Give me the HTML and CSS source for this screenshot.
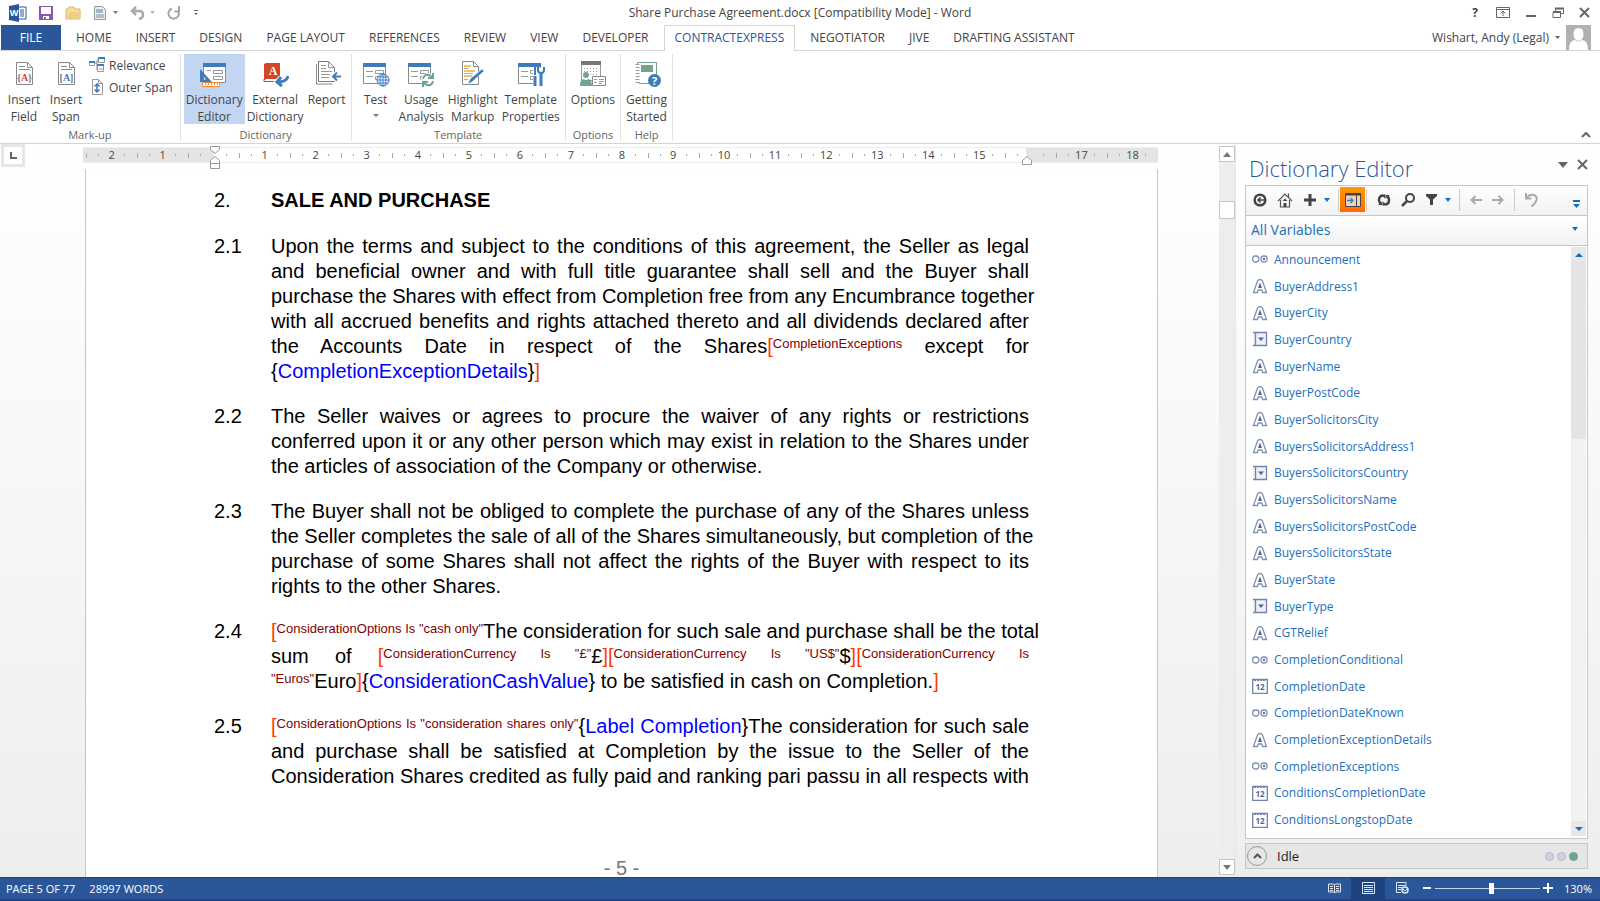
FILE: index.html
```html
<!DOCTYPE html>
<html lang="en">
<head>
    <meta charset="UTF-8">
    <title>Share Purchase Agreement.docx - Word</title>
    <link rel="stylesheet" href="styles.css">
</head>
<body>
    <svg class="defs">
        <symbol id="text" viewBox="0 0 16 16"><path d="M1.5 14.5 5.500 3Q8 0 10.500 3l4 11.500h-4l-.7-2.500H6.200l-.7 2.500z" fill="#fff" stroke="#8290b3" stroke-width="1.300"/><path d="m8 4.500-2 5.500h4z" fill="#54658f"/></symbol>
        <symbol id="bool" viewBox="0 0 16 16"><rect x=".7" y="5" width="6" height="6" rx="2.500" fill="none" stroke="#8290b3" stroke-width="1.300"/><rect x="9" y="5" width="6" height="6" rx="2.500" fill="none" stroke="#8290b3" stroke-width="1.300"/><circle cx="12" cy="8" r="1.300" fill="#66769f"/></symbol>
        <symbol id="list" viewBox="0 0 16 16"><path d="M1 1.500h13.500v13H1M3.500 1.500v13" fill="#eef0f6" stroke="#7282a8" stroke-width="1.300"/><path d="M6 6.500h6L9 10z" fill="#54658f"/></symbol>
        <symbol id="date" viewBox="0 0 16 16"><path d="M.7 1.500h14.600v13.800H.7z" fill="#fff" stroke="#7282a8" stroke-width="1.300"/><path d="M2 2.500h12" stroke="#7282a8" stroke-dasharray="2 1"/><text x="8" y="12" text-anchor="middle" class="daynum">12</text></symbol>
        <symbol id="form" viewBox="0 0 28 28"><path d="M1.500 3.500h22v19h-22z" fill="#fff" stroke="#8a8a8a"/><path d="M1 2h23v4H1z" fill="#3f7ab9"/><path d="M4 10.500h7M4 15.500h7M13.500 9.500h8v3h-8zM13.500 15.500h8v3h-8z" fill="none" stroke="#999"/></symbol>
    </svg>
    <header class="titlebar">
        <div class="quick">
            <svg width="18" height="18" viewBox="0 0 18 18"><path d="M8 3h9v12H8z" fill="#fff" stroke="#2b579a"/><path d="M11 6h4M11 8h4M11 10h4M11 12h4" stroke="#2b579a"/><path d="m0 2 10-2v18L0 16z" fill="#2b579a"/><text x="5" y="12" text-anchor="middle" class="wordmark">W</text></svg>
            <button aria-label="Save"><svg width="14" height="14" viewBox="0 0 14 14"><path d="M0 0h14v14H0z" fill="#8a56b0"/><path d="M2 1h10v7H2zM4 10h6v3H4z" fill="#fff"/><path d="M5 11h2v2H5z" fill="#8a56b0"/></svg></button>
            <button aria-label="Open"><svg width="17" height="14" viewBox="0 0 17 14"><path d="M1 13V3h2l1-2h5l1 2h5v10z" fill="#f5dda2" stroke="#dfb762"/><path d="m1 13 3-7h12l-1 7z" fill="#efcf86"/></svg></button>
            <button aria-label="Print preview"><svg width="24" height="14" viewBox="0 0 24 14"><path d="M.5.5h8l3 3v10H.5z" fill="#eee" stroke="#999"/><path d="M2 4h7M2 6h7" stroke="#4a7ebb"/><path d="M2 9h8M2 11h8" stroke="#888"/><path d="M19 5h5l-2.500 3z" fill="#777"/></svg></button>
            <button aria-label="Undo"><svg width="25" height="14" viewBox="0 0 25 14"><path d="M6 1 2 5l4 4M2 5h7q4 0 4 4 0 3-4 4" fill="none" stroke="#aaa" stroke-width="2.500"/><path d="M20 5h5l-2.500 3z" fill="#bbb"/></svg></button>
            <button aria-label="Repeat"><svg width="14" height="14" viewBox="0 0 14 14"><path d="M5 2.500A5.200 5.200 0 1 0 11 4.500M7.500 5.500h4.500V0" fill="none" stroke="#a5a5a5" stroke-width="2"/></svg></button>
            <button aria-label="Customize"><svg width="6" height="6" viewBox="0 0 6 6"><path d="M1 .5h4" stroke="#666"/><path d="M1 3h4L3 5z" fill="#666"/></svg></button>
        </div>
        <h1>Share Purchase Agreement.docx [Compatibility Mode] - Word</h1>
        <div class="window">
            <button class="help">?</button>
            <button aria-label="Ribbon display"><svg width="14" height="12" viewBox="0 0 14 12"><path d="M.5.5h13v10H.5zM.5 2.500h13M7 9V4M4.500 6.500 7 4l2.500 2.500" fill="none" stroke="#666"/></svg></button>
            <button aria-label="Minimize"><svg width="12" height="12" viewBox="0 0 12 12"><path d="M1 9h10" stroke="#666" stroke-width="2"/></svg></button>
            <button aria-label="Restore"><svg width="12" height="12" viewBox="0 0 12 12"><path d="M3.500 4V1.500h8v5H9M1 5.500h7.500v5H1z" fill="none" stroke="#666"/><path d="M3 1.500h9M1 5h8" stroke="#666" stroke-width="2"/></svg></button>
            <button aria-label="Close"><svg width="12" height="12" viewBox="0 0 12 12"><path d="m1 1 9 9M10 1 1 10" stroke="#666" stroke-width="2"/></svg></button>
        </div>
    </header>
    <nav class="tabs">
        <a href="#" class="file">FILE</a>
        <a href="#">HOME</a>
        <a href="#">INSERT</a>
        <a href="#">DESIGN</a>
        <a href="#">PAGE LAYOUT</a>
        <a href="#">REFERENCES</a>
        <a href="#">REVIEW</a>
        <a href="#">VIEW</a>
        <a href="#">DEVELOPER</a>
        <a href="#" class="current">CONTRACTEXPRESS</a>
        <a href="#">NEGOTIATOR</a>
        <a href="#">JIVE</a>
        <a href="#">DRAFTING ASSISTANT</a>
        <button class="user">Wishart, Andy (Legal)
            <svg width="5" height="3" viewBox="0 0 5 3"><path d="M0 0h5L2.500 3z" fill="#666"/></svg>
            <svg width="25" height="25" viewBox="0 0 25 25"><path d="M0 0h25v25H0z" fill="#b1b1b1"/><path d="M12.500 3q5 0 5 6t-5 7q-5-1-5-7t5-6z" fill="#fff"/><path d="M3 25q0-10 6-10 3.500 3 7 0 6 0 6 10z" fill="#fff"/></svg>
        </button>
    </nav>
    <section class="ribbon">
        <div class="group">
            <div class="tools">
                <button class="tool"><svg width="28" height="28" viewBox="0 0 28 28"><path d="M6.500 1.500h11l5 5v17h-16z" fill="#fff" stroke="#888"/><path d="M17.500 1.500v5h5M9 5.500h6M9 8.500h11" fill="none" stroke="#888"/><text x="14.500" y="20" text-anchor="middle" class="mark"><tspan>{</tspan><tspan class="red">A</tspan><tspan>}</tspan></text></svg>Insert<br>Field</button>
                <button class="tool"><svg width="28" height="28" viewBox="0 0 28 28"><path d="M6.500 1.500h11l5 5v17h-16z" fill="#fff" stroke="#888"/><path d="M17.500 1.500v5h5M9 5.500h6M9 8.500h11" fill="none" stroke="#888"/><text x="14.500" y="20" text-anchor="middle" class="mark"><tspan>[</tspan><tspan class="blue">A</tspan><tspan>]</tspan></text></svg>Insert<br>Span</button>
                <div class="small-tools">
                    <button><svg width="16" height="16" viewBox="0 0 16 16"><path d="M6 6h2V3h2M8 6v7h2" fill="none" stroke="#888"/><path d="M.5 4.500h5v4h-5zM9.500 1.500h6v4h-6zM8.500 7.500h6v7h-6z" fill="#fff" stroke="#999"/><path d="M0 4h6v2H0zM9 0h7v2H9zM8 7h7v2H8z" fill="#3f7ab9"/><path d="M10 12h4" stroke="#999"/></svg>Relevance</button>
                    <button><svg width="16" height="16" viewBox="0 0 16 16"><path d="M3.500.5h6l4 4v11h-10zM9.500.5v4h4" fill="#fff" stroke="#999"/><path d="M8 5v8M5.500 7.500 8 5l2.500 2.500M5.500 10.500 8 13l2.500-2.500" fill="none" stroke="#3f7ab9" stroke-width="1.500"/></svg>Outer Span</button>
                </div>
            </div>
            <div class="caption">Mark-up</div>
        </div>
        <div class="group">
            <div class="tools">
                <button class="tool active"><svg width="28" height="28" viewBox="0 0 28 28"><path d="M3.500 3.500h22v18h-22z" fill="#fff" stroke="#8a8a8a"/><path d="M3 2h23v4H3z" fill="#3f7ab9"/><path d="M7 9.500h4M13.500 9.500h9v3h-9zM13.500 15.500h9v3h-9z" fill="none" stroke="#999"/><path d="M0 8v13h12zm3 7 3 3.500H3z" fill="#3f7ab9" fill-rule="evenodd"/><path d="M2.500 21.500h17v4h-17z" fill="#fff" stroke="#ed8a3c"/><path d="M5.500 22v2M8.500 22v2M11.500 22v2M14.500 22v2M17.500 22v2" stroke="#ed8a3c"/></svg>Dictionary<br>Editor</button>
                <button class="tool"><svg width="28" height="28" viewBox="0 0 28 28"><path d="m3 3 2-1h14v17H3z" fill="#d24726"/><path d="M4.500 18.500H18" stroke="#fff"/><path d="M3 18v2.500h12" fill="none" stroke="#d24726"/><text x="12" y="14" text-anchor="middle" class="book">A</text><path d="M27 15q-1 6-10 6M20 16l-4 5 5 4" fill="none" stroke="#fff" stroke-width="5"/><path d="M27 15q-1 6-10 6M20 16l-4 5 5 4" fill="none" stroke="#3f7ab9" stroke-width="3"/></svg>External<br>Dictionary</button>
                <button class="tool"><svg width="28" height="28" viewBox="0 0 28 28"><path d="M3.500 3v20h16" fill="none" stroke="#888"/><path d="M5.500.5h10l6 6v14h-16z" fill="#fff" stroke="#777"/><path d="M15.500.5v6h6M8 4.500h5M8 7.500h5M8 10.500h11M8 13.500h9M8 16.500h8" fill="none" stroke="#999"/><path d="M19 11h9v9h-9z" fill="#fff"/><path d="M28 15.500h-7M24 11.500l-4 4 4 4" fill="none" stroke="#3f7ab9" stroke-width="2"/></svg>Report</button>
            </div>
            <div class="caption">Dictionary</div>
        </div>
        <div class="group">
            <div class="tools">
                <button class="tool"><svg width="28" height="28" viewBox="0 0 28 28"><use href="#form"/><circle cx="21" cy="19" r="6" fill="#fff" stroke="#3f7ab9"/><path d="M15 19h12M21 13v12M16 16h10M16 22h10" stroke="#3f7ab9"/><ellipse cx="21" cy="19" rx="3" ry="6" fill="none" stroke="#3f7ab9"/></svg>Test<svg class="drop" width="6" height="4" viewBox="0 0 6 4"><path d="M0 0h6L3 3z" fill="#777"/></svg></button>
                <button class="tool"><svg width="28" height="28" viewBox="0 0 28 28"><use href="#form"/><circle cx="21" cy="19" r="7" fill="#fff"/><path d="M16 18q1-5 6-4l3 2M26 12v5h-5M26 20q-1 5-6 4l-3-2M16 26v-5h5" fill="none" stroke="#6fa48d" stroke-width="2"/></svg>Usage<br>Analysis</button>
                <button class="tool"><svg width="28" height="28" viewBox="0 0 28 28"><path d="M3.500.5h11l5 5v18h-16z" fill="#fff" stroke="#888"/><path d="M14.500.5v5h5" fill="none" stroke="#888"/><path d="M5 5h7M5 10h11M5 15h8" stroke="#f2c268" stroke-width="2"/><path d="M5 7.500h5M5 12.500h9M5 18.500h4" stroke="#aaa"/><path d="m9 23 2-5L23 8l2 2-12 11z" fill="#3f7ab9" stroke="#fff" stroke-width=".5"/></svg>Highlight<br>Markup</button>
                <button class="tool"><svg width="28" height="28" viewBox="0 0 28 28"><use href="#form"/><path d="M16 7h11v19H16z" fill="#fff"/><path d="M18 6v8" stroke="#3f7ab9" stroke-width="2"/><path d="M18 15v10M24 12v13" stroke="#3f7ab9" stroke-width="3"/><path d="M21 6v3q0 3 3 3t3-3V6" fill="none" stroke="#3f7ab9" stroke-width="2"/></svg>Template<br>Properties</button>
            </div>
            <div class="caption">Template</div>
        </div>
        <div class="group">
            <div class="tools">
                <button class="tool"><svg width="28" height="28" viewBox="0 0 28 28"><path d="M2.500 1.500h19v18h-19z" fill="#fff" stroke="#999"/><path d="M2 0h20v4H2z" fill="#777"/><path d="M5 7.500h14M5 10.500h14M5 13.500h14" stroke="#999" stroke-dasharray="1 2"/><circle cx="7" cy="14" r="3" fill="#6fa48d"/><path d="M1 25q0-7 4-7l2 2 2-2q4 0 4 7z" fill="#6fa48d"/><path d="M13.500 15.500h13v9h-13z" fill="#fff" stroke="#888"/><path d="M15 18.500h3M15 21.500h3M20 18.500h5M20 20.500h5M20 22.500h3" stroke="#999"/></svg>Options</button>
            </div>
            <div class="caption">Options</div>
        </div>
        <div class="group">
            <div class="tools">
                <button class="tool"><svg width="28" height="28" viewBox="0 0 28 28"><path d="M4.500 1.500h19v21h-19z" fill="#fff" stroke="#6fa48d"/><path d="M8 4h12v7H8z" fill="#6fa48d"/><path d="M4.500 3v20" stroke="#fff" stroke-width="3"/><path d="M4.500 3v20" stroke="#999" stroke-width="4" stroke-dasharray="1 2"/><circle cx="21.500" cy="19.500" r="6.500" fill="#3f7ab9"/><text x="21.500" y="24" text-anchor="middle" class="query">?</text></svg>Getting<br>Started</button>
            </div>
            <div class="caption">Help</div>
        </div>
        <button class="collapse" aria-label="Collapse ribbon"><svg width="10" height="7" viewBox="0 0 10 7"><path d="m1 6 4-4 4 4" fill="none" stroke="#666" stroke-width="2"/></svg></button>
    </section>
    <main class="workspace">
        <button class="tabstop" aria-label="Tab stop"><svg width="7" height="7" viewBox="0 0 7 7"><path d="M1 0v6h6" fill="none" stroke="#666" stroke-width="2"/></svg></button>
        <div class="document">
            <div class="ruler">
                <span>2</span><span>1</span><span></span><span>1</span><span>2</span><span>3</span><span>4</span><span>5</span><span>6</span><span>7</span><span>8</span><span>9</span><span>10</span><span>11</span><span>12</span><span>13</span><span>14</span><span>15</span><span></span><span>17</span><span>18</span>
                <svg class="indent-left" width="10" height="24" viewBox="0 0 10 24"><path d="M.5.5h9v3l-4.500 4-4.500-4zM.5 22.500v-8l4.500-4 4.500 4v8zM.5 17.500h9" fill="#fff" stroke="#999"/></svg>
                <svg class="indent-right" width="10" height="9" viewBox="0 0 10 9"><path d="M.5 8.500v-4l4.500-4 4.500 4v4z" fill="#fff" stroke="#999"/></svg>
            </div>
            <article class="page">
                <div class="clause"><span>2.</span><h2>SALE AND PURCHASE</h2></div>
                <div class="clause">
                    <span>2.1</span>
                    <p>Upon the terms and subject to the conditions of this agreement, the Seller as legal<br>
                    and beneficial owner and with full title guarantee shall sell and the Buyer shall<br>
                    purchase the Shares with effect from Completion free from any Encumbrance together<br>
                    with all accrued benefits and rights attached thereto and all dividends declared after<br>
                    the Accounts Date in respect of the Shares<b>[</b><sup>CompletionExceptions</sup> except for
                    <span class="last">{<i>CompletionExceptionDetails</i>}<b>]</b></span></p>
                </div>
                <div class="clause">
                    <span>2.2</span>
                    <p>The Seller waives or agrees to procure the waiver of any rights or restrictions<br>
                    conferred upon it or any other person which may exist in relation to the Shares under
                    <span class="last">the articles of association of the Company or otherwise.</span></p>
                </div>
                <div class="clause">
                    <span>2.3</span>
                    <p>The Buyer shall not be obliged to complete the purchase of any of the Shares unless<br>
                    the Seller completes the sale of all of the Shares simultaneously, but completion of the<br>
                    purchase of some Shares shall not affect the rights of the Buyer with respect to its
                    <span class="last">rights to the other Shares.</span></p>
                </div>
                <div class="clause">
                    <span>2.4</span>
                    <p><b>[</b><sup>ConsiderationOptions Is "cash only"</sup>The consideration for such sale and purchase shall be the total<br>
                    sum of <b>[</b><sup>ConsiderationCurrency Is "£"</sup>£<b>][</b><sup>ConsiderationCurrency Is "US$"</sup>$<b>][</b><sup>ConsiderationCurrency Is</sup>
                    <span class="last"><sup>"Euros"</sup>Euro<b>]</b>{<i>ConsiderationCashValue</i>} to be satisfied in cash on Completion.<b>]</b></span></p>
                </div>
                <div class="clause">
                    <span>2.5</span>
                    <p><b>[</b><sup>ConsiderationOptions Is "consideration shares only"</sup>{<i>Label Completion</i>}The consideration for such sale<br>
                    and purchase shall be satisfied at Completion by the issue to the Seller of the<br>
                    Consideration Shares credited as fully paid and ranking pari passu in all respects with</p>
                </div>
                <footer>- 5 -</footer>
            </article>
        </div>
        <div class="scroll">
            <button aria-label="Scroll up"><svg width="8" height="5" viewBox="0 0 8 5"><path d="M0 5h8L4 0z" fill="#777"/></svg></button>
            <div class="thumb"></div>
            <button aria-label="Scroll down"><svg width="8" height="5" viewBox="0 0 8 5"><path d="M0 0h8L4 5z" fill="#777"/></svg></button>
        </div>
        <aside class="panel">
            <div class="panel-title">
                <h2>Dictionary Editor</h2>
                <button aria-label="Pane options"><svg width="10" height="6" viewBox="0 0 10 6"><path d="M0 0h10L5 6z" fill="#666"/></svg></button>
                <button aria-label="Close pane"><svg width="11" height="11" viewBox="0 0 11 11"><path d="m1 1 9 9M10 1l-9 9" stroke="#666" stroke-width="2"/></svg></button>
            </div>
            <div class="toolbar">
                <button aria-label="Back"><svg width="14" height="14" viewBox="0 0 14 14"><circle cx="7" cy="7" r="5.300" fill="none" stroke="#444" stroke-width="2.500"/><path d="M11 7H5M7.500 4.500 5 7l2.500 2.500" fill="none" stroke="#444" stroke-width="1.600"/></svg></button>
                <button aria-label="Home"><svg width="16" height="16" viewBox="0 0 16 16"><path d="M1 9 8 2l7 7M3.500 8v7h9V8M11.500 5V1.500" fill="none" stroke="#555" stroke-width="1.200"/><path d="M6.500 15v-4h3v4zM5.500 9 8 6.500 10.500 9z" fill="#444"/></svg></button>
                <button aria-label="Add"><svg width="14" height="12" viewBox="0 0 14 12"><path d="M1 6h12M7 0v12" stroke="#444" stroke-width="3"/></svg></button>
                <button class="more" aria-label="Add options"><svg width="6" height="4" viewBox="0 0 6 4"><path d="M0 0h6L3 4z" fill="#0b6fc7"/></svg></button>
                <hr>
                <button class="on" aria-label="Insert into document"><svg width="16" height="14" viewBox="0 0 16 14"><path d="M.5.500h15v13H.5z" fill="#e9d5bf" stroke="#444"/><path d="M0 1.500h16" stroke="#444" stroke-width="2"/><path d="M11.500 2v11" stroke="#444"/><path d="M2 7.500h6M5.500 5 8 7.500 5.500 10" fill="none" stroke="#3f7ab9" stroke-width="1.300"/></svg></button>
                <hr>
                <button aria-label="Refresh"><svg width="14" height="14" viewBox="0 0 14 14"><path d="M6.500 2.500Q2 2.500 2 7q0 2 1.500 3.500M7.500 11.500Q12 11.500 12 7q0-2-1.500-3.500" fill="none" stroke="#444" stroke-width="2.500"/><path d="M8.500 1v5L5 2.500zM5.500 13V8L9 11.500zM1 12h5V8zM13 2H8v4z" fill="#444"/></svg></button>
                <button aria-label="Search"><svg width="14" height="14" viewBox="0 0 14 14"><circle cx="9" cy="5" r="4" fill="none" stroke="#444" stroke-width="2"/><path d="m6 8-5 5" stroke="#444" stroke-width="2.500"/></svg></button>
                <button aria-label="Filter"><svg width="13" height="11" viewBox="0 0 13 11"><path d="M1 0h11v2L8 5.500V11H5V5.500L1 2z" fill="#444"/></svg></button>
                <button class="more" aria-label="Filter options"><svg width="6" height="4" viewBox="0 0 6 4"><path d="M0 0h6L3 4z" fill="#0b6fc7"/></svg></button>
                <hr>
                <button aria-label="Previous"><svg width="12" height="10" viewBox="0 0 12 10"><path d="M12 5H2M5.500 1 1.500 5l4 4" fill="none" stroke="#aaa" stroke-width="2"/></svg></button>
                <button aria-label="Next"><svg width="12" height="10" viewBox="0 0 12 10"><path d="M0 5h10M6.500 1l4 4-4 4" fill="none" stroke="#aaa" stroke-width="2"/></svg></button>
                <hr>
                <button aria-label="Undo"><svg width="13" height="14" viewBox="0 0 13 14"><path d="M1 0v5.500h5.500M1.500 5q3-4 7-3 4 1 3 5-1 3.500-5 6.500" fill="none" stroke="#aaa" stroke-width="2"/></svg></button>
                <button class="overflow" aria-label="More tools"><svg width="7" height="8" viewBox="0 0 7 8"><path d="M0 1h7" stroke="#0b6fc7" stroke-width="2"/><path d="M0 4h7L3.500 8z" fill="#0b6fc7"/></svg></button>
            </div>
            <div class="filter">
                <select aria-label="Variables"><option>All Variables</option></select>
                <svg width="6" height="4" viewBox="0 0 6 4"><path d="M0 0h6L3 4z" fill="#0b6fc7"/></svg>
            </div>
            <div class="variables">
                <ul>
                    <li><a href="#"><svg><use href="#bool"/></svg>Announcement</a></li>
                    <li><a href="#"><svg><use href="#text"/></svg>BuyerAddress1</a></li>
                    <li><a href="#"><svg><use href="#text"/></svg>BuyerCity</a></li>
                    <li><a href="#"><svg><use href="#list"/></svg>BuyerCountry</a></li>
                    <li><a href="#"><svg><use href="#text"/></svg>BuyerName</a></li>
                    <li><a href="#"><svg><use href="#text"/></svg>BuyerPostCode</a></li>
                    <li><a href="#"><svg><use href="#text"/></svg>BuyerSolicitorsCity</a></li>
                    <li><a href="#"><svg><use href="#text"/></svg>BuyersSolicitorsAddress1</a></li>
                    <li><a href="#"><svg><use href="#list"/></svg>BuyersSolicitorsCountry</a></li>
                    <li><a href="#"><svg><use href="#text"/></svg>BuyersSolicitorsName</a></li>
                    <li><a href="#"><svg><use href="#text"/></svg>BuyersSolicitorsPostCode</a></li>
                    <li><a href="#"><svg><use href="#text"/></svg>BuyersSolicitorsState</a></li>
                    <li><a href="#"><svg><use href="#text"/></svg>BuyerState</a></li>
                    <li><a href="#"><svg><use href="#list"/></svg>BuyerType</a></li>
                    <li><a href="#"><svg><use href="#text"/></svg>CGTRelief</a></li>
                    <li><a href="#"><svg><use href="#bool"/></svg>CompletionConditional</a></li>
                    <li><a href="#"><svg><use href="#date"/></svg>CompletionDate</a></li>
                    <li><a href="#"><svg><use href="#bool"/></svg>CompletionDateKnown</a></li>
                    <li><a href="#"><svg><use href="#text"/></svg>CompletionExceptionDetails</a></li>
                    <li><a href="#"><svg><use href="#bool"/></svg>CompletionExceptions</a></li>
                    <li><a href="#"><svg><use href="#date"/></svg>ConditionsCompletionDate</a></li>
                    <li><a href="#"><svg><use href="#date"/></svg>ConditionsLongstopDate</a></li>
                </ul>
                <div class="list-scroll">
                    <button aria-label="Scroll up"><svg width="8" height="4" viewBox="0 0 8 4"><path d="M0 4h8L4 0z" fill="#0b6fc7"/></svg></button>
                    <div class="thumb"></div>
                    <button aria-label="Scroll down"><svg width="8" height="4" viewBox="0 0 8 4"><path d="M0 0h8L4 4z" fill="#0b6fc7"/></svg></button>
                </div>
            </div>
            <div class="state">
                <button aria-label="Expand"><svg width="9" height="6" viewBox="0 0 9 6"><path d="m1 5 3.500-3.500L8 5" fill="none" stroke="#555" stroke-width="2"/></svg></button>
                <span>Idle</span>
                <i></i><i></i><i class="ready"></i>
            </div>
        </aside>
    </main>
    <footer class="status">
        <span>PAGE 5 OF 77</span>
        <span>28997 WORDS</span>
        <div class="views">
            <button aria-label="Read mode"><svg width="13" height="11" viewBox="0 0 13 11"><path d="M.5 1h5l1 1 1-1h5v8h-5l-1 1-1-1h-5zM6.500 2v8M2 3.500h3M2 5.500h3M2 7.500h3M8 3.500h3M8 5.500h3M8 7.500h3" fill="none" stroke="#dfe7f3"/></svg></button>
            <button class="on" aria-label="Print layout"><svg width="13" height="12" viewBox="0 0 13 12"><path d="M.5.500h12v11H.5zM2 3.500h9M2 5.500h9M2 7.500h9M2 9.500h9" fill="none" stroke="#dfe7f3"/></svg></button>
            <button aria-label="Web layout"><svg width="13" height="12" viewBox="0 0 13 12"><path d="M10 4V.5H.5v10H5M2 3.500h7M2 5.500h4M2 7.500h3" fill="none" stroke="#dfe7f3"/><circle cx="9" cy="8" r="3" fill="#2b579a" stroke="#dfe7f3" stroke-width="1.500"/><path d="m7 7 2 2 2-2" fill="none" stroke="#dfe7f3"/></svg></button>
        </div>
        <button aria-label="Zoom out"><svg width="10" height="10" viewBox="0 0 10 10"><path d="M1 5h8" stroke="#fff" stroke-width="2"/></svg></button>
        <input type="range" min="0" max="100" value="54" aria-label="Zoom">
        <button aria-label="Zoom in"><svg width="10" height="10" viewBox="0 0 10 10"><path d="M0 5h10M5 0v10" stroke="#fff" stroke-width="2"/></svg></button>
        <span class="percent">130%</span>
    </footer>
</body>
</html>
```

FILE: styles.css
```css
* {
    box-sizing: border-box;
}
body {
    margin: 0;
    height: 100vh;
    display: flex;
    flex-direction: column;
    font-family: "Open Sans", "Noto Sans", sans-serif;
    font-size: 12px;
    color: #444;
    background: #fff;
    overflow: hidden;
}
button {
    display: flex;
    align-items: center;
    justify-content: center;
    padding: 0;
    border: 0;
    background: none;
    font: inherit;
    color: inherit;
}
svg {
    flex: none;
}
a {
    color: inherit;
    text-decoration: none;
}
h1, h2, p, ul {
    margin: 0;
    padding: 0;
    font-weight: normal;
}
.defs {
    display: none;
}

/* title bar */
.titlebar {
    display: grid;
    grid-template-columns: 1fr auto 1fr;
    height: 25px;
    align-items: center;
}
.titlebar h1 {
    font-size: 12px;
}
.quick {
    display: flex;
    align-items: center;
    padding-left: 9px;
    gap: 12px;
}
.window {
    display: flex;
    justify-content: flex-end;
    padding-right: 9px;
    gap: 15px;
}
.help {
    font-weight: bold;
    width: 12px;
    height: 14px;
}
.wordmark {
    font: bold 9px "Open Sans", sans-serif;
    fill: #fff;
}

/* tabs */
.tabs {
    display: flex;
    height: 26px;
    padding: 0 9px 0 1px;
    border-bottom: 1px solid #d4d4d4;
    line-height: 25px;
}
.tabs a {
    padding: 0 12px;
    height: 25px;
}
.tabs .file {
    width: 60px;
    margin-right: 3px;
    text-align: center;
    color: #fff;
    background: #2b579a;
}
.tabs .current {
    height: 26px;
    margin: 0 3px;
    padding: 0 10px;
    border: 1px solid #d4d4d4;
    border-bottom: 0;
    color: #2b579a;
    background: #fff;
    line-height: 24px;
}
.user {
    margin-left: auto;
    gap: 6px;
    height: 25px;
}

/* ribbon */
.ribbon {
    display: flex;
    height: 93px;
    padding: 3px 9px 2px 0;
    border-bottom: 1px solid #d4d4d4;
}
.group {
    display: flex;
    flex-direction: column;
    justify-content: space-between;
    padding: 0 3px;
    border-right: 1px solid #e1e1e1;
}
.tools {
    display: flex;
}
.tool {
    display: flex;
    flex-direction: column;
    justify-content: flex-start;
    min-width: 42px;
    height: 70px;
    padding: 7px 2px 0;
    line-height: 17px;
}
.tool > svg:first-child {
    margin-bottom: 2px;
}
.tool .drop {
    margin-top: 6px;
}
.tool.active {
    background: #c2d5f2;
}
.small-tools button {
    gap: 4px;
    height: 22px;
    padding: 0 4px 0 2px;
}
.caption {
    font-size: 11px;
    line-height: 12px;
    text-align: center;
    color: #666;
}
.collapse {
    margin: auto 0 3px auto;
}
.mark {
    font: bold 10px "Liberation Serif", serif;
    fill: #777;
}
.red {
    fill: #d24726;
}
.blue {
    fill: #3f7ab9;
}
.book {
    font: bold 12px "Liberation Serif", serif;
    fill: #fff;
}
.query {
    font: bold 11px "Open Sans", sans-serif;
    fill: #fff;
}

/* document */
.workspace {
    display: flex;
    flex: 1;
    min-height: 0;
    background: linear-gradient(#fff, #eee);
}
.tabstop {
    width: 24px;
    height: 23px;
    margin-left: 1px;
    border: 3px solid #e6e6e6;
    background: #fff;
}
.document {
    flex: 1;
    display: flex;
    flex-direction: column;
    padding: 3px 61px 0 58px;
    min-width: 0;
}
.ruler {
    position: relative;
    display: grid;
    grid-template-columns: repeat(21, 1fr);
    height: 16px;
    padding-left: 3px;
    border: solid #eee;
    border-width: 1px 0;
    background: linear-gradient(90deg, #e4e4e4 131px, #fff 131px calc(100% - 132px), #e4e4e4 calc(100% - 132px));
    font-size: 11px;
    line-height: 14px;
}
.ruler span {
    display: flex;
    justify-content: space-between;
    align-items: center;
    padding: 0 12px;
    background: linear-gradient(#aaa, #aaa) 0 50% / 1px 5px no-repeat;
}
.ruler span::before, .ruler span::after {
    content: "";
    width: 1px;
    height: 2px;
    background: #aaa;
}
.indent-left {
    position: absolute;
    left: 127px;
    top: -2px;
}
.indent-right {
    position: absolute;
    right: 126px;
    top: 8px;
}
.page {
    flex: 1;
    display: flex;
    flex-direction: column;
    min-height: 0;
    margin: 6px 0 0 2px;
    padding: 19px 128px 0;
    border: solid #c6c6c6;
    border-width: 0 1px;
    background: #fff;
    font-family: "Liberation Sans", Arial, sans-serif;
    font-size: 20px;
    line-height: 25px;
    color: #000;
}
.clause {
    display: flex;
    margin-bottom: 20px;
}
.clause:first-child {
    margin-bottom: 21px;
}
.clause > span {
    flex: 0 0 57px;
}
.clause h2 {
    font-size: 20px;
    font-weight: bold;
}
.clause p {
    flex: 1;
    min-width: 0;
    text-align: justify;
    text-align-last: justify;
    white-space: nowrap;
}
.clause .last {
    display: block;
    text-align-last: left;
}
.clause b {
    font-weight: normal;
    color: #ff3c00;
}
.clause i {
    font-style: normal;
    color: #0000ff;
}
.clause sup {
    font-size: 13px;
    line-height: 13px;
    vertical-align: 5px;
    color: #800000;
}
.page footer {
    margin-top: auto;
    height: 21px;
    text-align: center;
    color: #777;
}
.scroll {
    display: flex;
    flex-direction: column;
    justify-content: space-between;
    width: 16px;
    margin: 2px 0;
    background: #ededed;
}
.scroll button, .scroll .thumb {
    height: 16px;
    border: 1px solid #c6c6c6;
    background: #fff;
}
.scroll .thumb {
    height: 18px;
    margin: 39px 0 auto;
}

/* dictionary pane */
.panel {
    display: flex;
    flex-direction: column;
    width: 358px;
    margin: 0 7px 6px 0;
    padding: 0 5px 2px 9px;
    border-left: 1px solid #e6e6e6;
}
.panel-title {
    display: flex;
    align-items: center;
    gap: 9px;
    height: 41px;
    padding-left: 4px;
}
.panel-title h2 {
    flex: 1;
    padding-top: 6px;
    font-size: 22px;
    font-weight: 300;
    color: #2b579a;
}
.toolbar {
    display: flex;
    align-items: center;
    gap: 10px;
    height: 30px;
    padding: 0 7px 2px;
    border: 1px solid #c6c6c6;
    border-bottom: 0;
    background: linear-gradient(#fff, #f2f2f2);
}
.toolbar hr {
    width: 1px;
    height: 22px;
    margin: 0;
    border: 0;
    background: #ccc;
}
.toolbar .more {
    margin: 0 -2px 0 -3px;
}
.toolbar .on {
    width: 25px;
    height: 25px;
    margin: 0 -9px;
    background: linear-gradient(#ff9a00, #ff6a00);
}
.toolbar .overflow {
    margin: 8px 0 0 auto;
}
.filter {
    display: flex;
    align-items: center;
    height: 31px;
    padding: 0 9px 3px 5px;
    border: 1px solid #c6c6c6;
    background: linear-gradient(#fff, #f2f2f2);
}
.filter select {
    flex: 1;
    appearance: none;
    padding: 0;
    border: 0;
    background: none;
    font: 14px "Open Sans", "Noto Sans", sans-serif;
    color: #1c6fbf;
}
.variables {
    flex: 1;
    display: flex;
    min-height: 0;
    border: 1px solid #c6c6c6;
    border-top: 0;
    background: #fff;
}
.variables ul {
    flex: 1;
    display: grid;
    grid-auto-rows: 1fr;
    padding: 0 0 5px 6px;
    list-style: none;
}
.variables a {
    display: flex;
    align-items: center;
    gap: 6px;
    height: 100%;
    color: #1c6fbf;
}
.variables a svg {
    width: 16px;
    height: 16px;
}
.daynum {
    font: bold 8px "Open Sans", sans-serif;
    fill: #54658f;
}
.list-scroll {
    display: flex;
    flex-direction: column;
    width: 15px;
    margin: 1px 1px 2px;
    background: #f2f2f2;
}
.list-scroll button {
    height: 15px;
    background: #e8e8e8;
}
.list-scroll .thumb {
    height: 30%;
    margin-bottom: auto;
    background: #e4e4e4;
}
.state {
    display: flex;
    align-items: center;
    gap: 3px;
    height: 26px;
    margin-top: 4px;
    padding: 0 9px 0 1px;
    border: 1px solid #c6c6c6;
    background: #e6e6e6;
    font-size: 13px;
    color: #222;
}
.state button {
    width: 20px;
    height: 20px;
    border: 1px solid #999;
    border-radius: 50%;
}
.state span {
    flex: 1;
    padding-left: 7px;
}
.state i {
    width: 9px;
    height: 9px;
    border: 1px solid #b4bac6;
    border-radius: 50%;
    background: #ccd1db;
}
.state .ready {
    border-color: #6fa48d;
    background: #6fa48d;
}

/* status bar */
.status {
    display: flex;
    align-items: center;
    height: 24px;
    padding: 0 8px 1px 6px;
    border: solid #1d4480;
    border-width: 1px 0 2px;
    background: #2b579a;
    font-size: 11px;
    color: #fff;
}
.status span {
    margin-right: 14px;
}
.views {
    display: flex;
    margin-left: auto;
}
.views button {
    width: 34px;
    height: 21px;
}
.views .on {
    background: #1d4480;
}
.status > button {
    margin: 0 3px;
}
.status input {
    appearance: none;
    width: 105px;
    height: 11px;
    margin: 0;
    background: linear-gradient(#c9d5e6, #c9d5e6) 0 50% / 100% 1px no-repeat;
}
.status input::-webkit-slider-thumb {
    appearance: none;
    width: 5px;
    height: 11px;
    background: #fff;
}
.status .percent {
    margin: 0 0 0 8px;
}
```
